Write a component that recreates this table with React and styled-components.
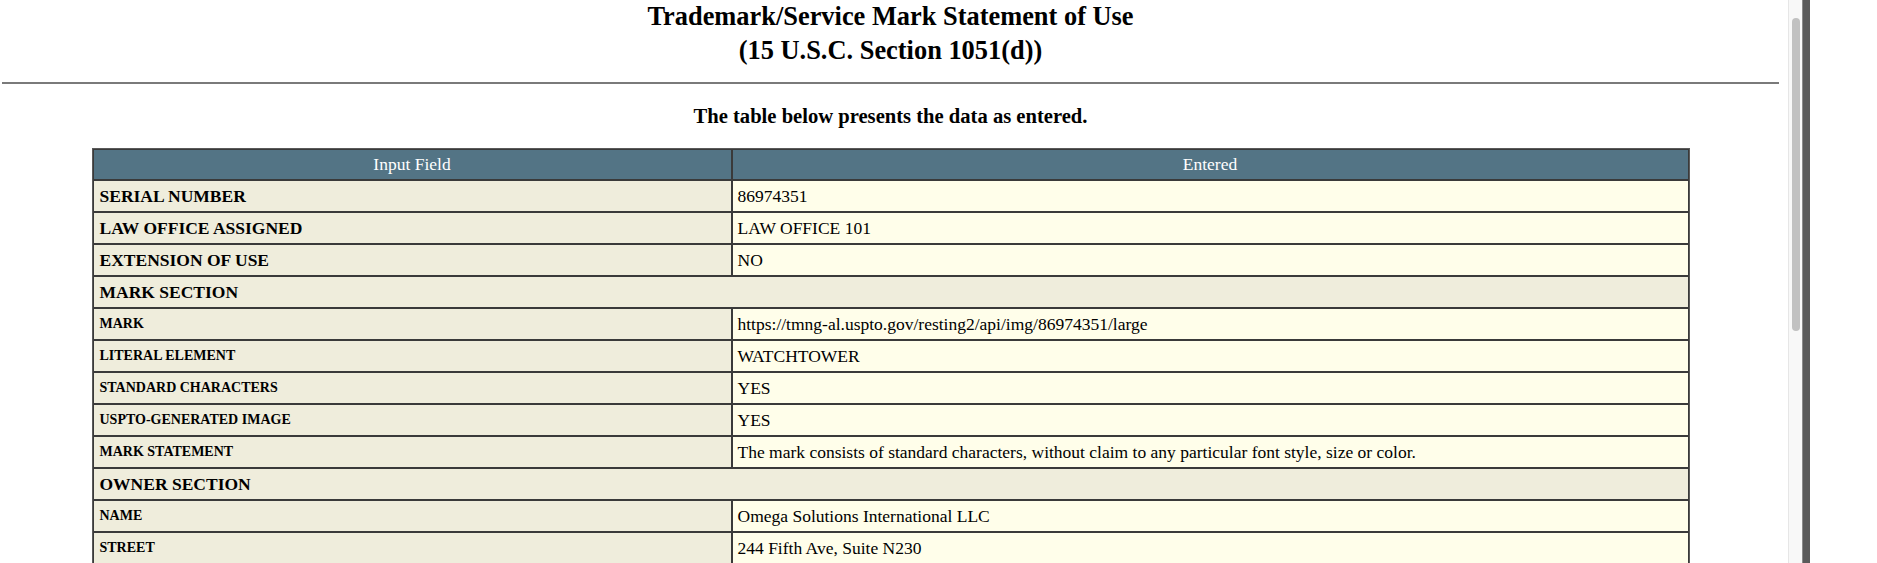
import styled, { createGlobalStyle } from 'styled-components';

const GlobalStyle = createGlobalStyle`
    html, body {
        margin: 0;
        padding: 0;
        height: 563px;
        overflow: hidden;
        background: #ffffff;
    }
`;

const rows = [
    { label: 'SERIAL NUMBER', value: '86974351', size: 'big' },
    { label: 'LAW OFFICE ASSIGNED', value: 'LAW OFFICE 101', size: 'big' },
    { label: 'EXTENSION OF USE', value: 'NO', size: 'big' },
    { section: 'MARK SECTION' },
    { label: 'MARK', value: 'https://tmng-al.uspto.gov/resting2/api/img/86974351/large' },
    { label: 'LITERAL ELEMENT', value: 'WATCHTOWER' },
    { label: 'STANDARD CHARACTERS', value: 'YES' },
    { label: 'USPTO-GENERATED IMAGE', value: 'YES' },
    { label: 'MARK STATEMENT', value: 'The mark consists of standard characters, without claim to any particular font style, size or color.' },
    { section: 'OWNER SECTION' },
    { label: 'NAME', value: 'Omega Solutions International LLC' },
    { label: 'STREET', value: '244 Fifth Ave, Suite N230' },
];

const App = () => {
    return (
        <Frame>
            <GlobalStyle />
            <Page>
                <Title>
                    Trademark/Service Mark Statement of Use
                    <br />
                    (15 U.S.C. Section 1051(d))
                </Title>
                <Rule />
                <Intro>The table below presents the data as entered.</Intro>
                <DataTable>
                    <colgroup>
                        <FieldCol />
                        <col />
                    </colgroup>
                    <thead>
                        <tr>
                            <HeadCell>Input Field</HeadCell>
                            <HeadCell>Entered</HeadCell>
                        </tr>
                    </thead>
                    <tbody>
                        {rows.map((row, i) =>
                            row.section ? (
                                <tr key={i}>
                                    <SectionCell colSpan={2}>{row.section}</SectionCell>
                                </tr>
                            ) : (
                                <tr key={i}>
                                    <LabelCell size={row.size}>{row.label}</LabelCell>
                                    <ValueCell>{row.value}</ValueCell>
                                </tr>
                            )
                        )}
                    </tbody>
                </DataTable>
            </Page>
            <ScrollTrack>
                <ScrollThumb />
            </ScrollTrack>
            <WindowEdge />
        </Frame>
    );
};

export default App;

const Frame = styled.div`
    display: flex;
    align-items: flex-start;
    width: 1877px;
    height: 563px;
    overflow: hidden;
    background: #ffffff;
    font-family: "Liberation Serif", "Times New Roman", serif;
    color: #000000;
`;

const Page = styled.div`
    width: 1781px;
    padding-right: 7px;
    flex-shrink: 0;
`;

const Title = styled.div`
    margin-top: -1px;
    font-size: 26.4px;
    font-weight: bold;
    line-height: 34px;
    text-align: center;
`;

const Rule = styled.div`
    margin: 15px 2px 0 2px;
    height: 2px;
    background: #7a7a7a;
`;

const Intro = styled.div`
    margin-top: 20px;
    font-size: 20.6px;
    font-weight: bold;
    line-height: 24px;
    text-align: center;
`;

const DataTable = styled.table`
    margin: 20px auto 0 auto;
    width: 1598px;
    border: 1px solid #5a5a5a;
    border-spacing: 0;
    table-layout: fixed;
    font-size: 17.5px;

    td, th {
        border: 1px solid #3a3a3a;
        padding: 0 6px;
        height: 30px;
        text-align: left;
        vertical-align: middle;
    }
`;

const FieldCol = styled.col`
    width: 639px;
`;

const HeadCell = styled.th`
    && {
        height: 29px;
        text-align: center;
    }
    background: #537485;
    color: #ffffff;
    font-weight: normal;
`;

const LabelCell = styled.td`
    background: #efeddc;
    font-weight: bold;
    font-size: ${props => (props.size === 'big' ? '17.5px' : '14px')};
`;

const ValueCell = styled.td`
    background: #fffeea;
    && {
        padding-left: 5px;
    }
`;

const SectionCell = styled.td`
    background: #efeddc;
    font-weight: bold;
    font-size: 17.5px;
`;

const ScrollTrack = styled.div`
    width: 14px;
    height: 563px;
    flex-shrink: 0;
    background: #f8f8f8;
    border-left: 1px solid #e6e6e6;
    display: flex;
    justify-content: center;
    padding-top: 18px;
    box-sizing: border-box;
`;

const ScrollThumb = styled.div`
    width: 8px;
    height: 313px;
    border-radius: 4px;
    background: #c1c1c1;
`;

const WindowEdge = styled.div`
    width: 8px;
    height: 563px;
    flex-shrink: 0;
    background: #5a5a5a;
    border-left: 1px solid #8a8a8a;
    box-sizing: border-box;
`;
